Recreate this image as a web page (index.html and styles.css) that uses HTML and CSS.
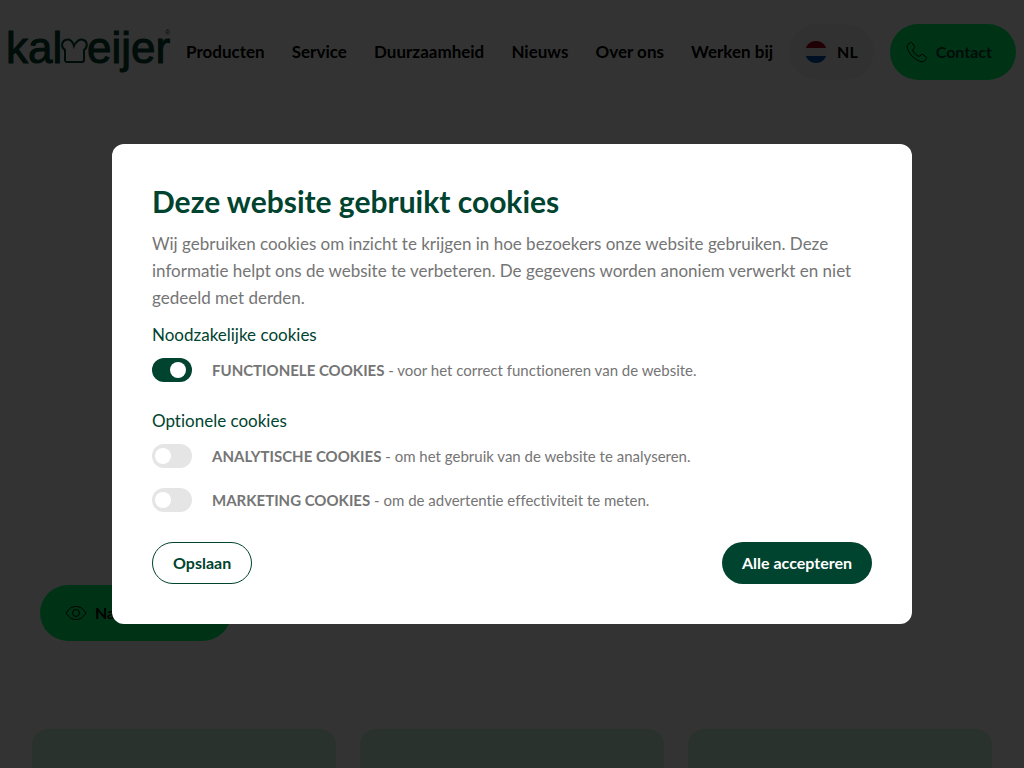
FILE: index.html
```
<!DOCTYPE html>
<html lang="nl">
  <head>
    <meta charset="UTF-8">
    <meta name="viewport" content="width=device-width, initial-scale=1.0">
    <title>Kalmeijer</title>
    <link rel="stylesheet" href="styles.css">
  </head>

  <body>
    <header class="header">
      <a class="logo" href="#" aria-label="Kalmeijer">
        <svg width="162" height="48" viewBox="0 0 162 48">
          <text class="logo-txt" x="-2" y="35">kal</text>
          <path class="bread" d="M59 34C57.500 34 57 33 57 31.500V22C53 20 53 13.500 57.500 12C61.500 10.500 65 13 66 18C68 13 72 10.500 75.500 12C80 13.500 79.500 20 76 22V31.500C76 33 75 34 74 34Z"/>
          <text class="logo-txt" x="79" y="35">eijer</text>
          <text class="logo-r" x="157" y="7">®</text>
        </svg>
      </a>

      <nav class="nav">
        <a href="#">Producten</a>
        <a href="#">Service</a>
        <a href="#">Duurzaamheid</a>
        <a href="#">Nieuws</a>
        <a href="#">Over ons</a>
        <a href="#">Werken bij</a>
      </nav>

      <button type="button" class="lang">
        <svg width="22" height="22" viewBox="0 0 22 22">
          <clipPath id="round"><circle cx="11" cy="11" r="11"/></clipPath>
          <g clip-path="url(#round)">
            <rect width="22" height="22" fill="#eee"/>
            <rect width="22" height="7" fill="#a2001d"/>
            <rect y="15" width="22" height="7" fill="#0052b4"/>
          </g>
        </svg>
        NL
      </button>

      <a class="btn" href="#">
        <svg class="icon" width="22" height="22" viewBox="0 0 22 22">
          <path d="M2 3.500L4 1.800C4.700 1.200 5.600 1.300 6.200 2L8.300 5C8.800 5.800 8.700 6.500 8.100 7.100L7 8.300C6.600 8.800 6.600 9.300 6.900 9.900C8.200 12.200 9.900 13.900 12.200 15.100C12.800 15.400 13.300 15.400 13.700 15L15 13.900C15.600 13.400 16.300 13.300 17 13.800L20 15.800C20.700 16.400 20.800 17.200 20.200 17.900L18.500 19.900C17.600 20.900 16.200 21 14.900 20.600C8.500 18.600 3.400 13.500 1.400 7.200C1 5.800 1 4.500 2 3.500Z"/>
        </svg>
        Contact
      </a>
    </header>

    <main>
      <section class="hero">
        <a class="btn btn-hero" href="#">
          <svg class="icon" width="22" height="16" viewBox="0 0 22 16">
            <path d="M1 8C4 3.500 7 1.500 11 1.500S18 3.500 21 8C18 12.500 15 14.500 11 14.500S4 12.500 1 8Z"/>
            <circle cx="11" cy="8" r="3.500"/>
          </svg>
          Naar producten
        </a>
      </section>

      <section class="cards">
        <div class="card"></div>
        <div class="card"></div>
        <div class="card"></div>
      </section>
    </main>

    <!-- cookiemelding -->
    <div class="overlay">
      <form class="modal" role="dialog" aria-labelledby="cookie-title">
        <h2 id="cookie-title">Deze website gebruikt cookies</h2>
        <p>Wij gebruiken cookies om inzicht te krijgen in hoe bezoekers onze website gebruiken. Deze informatie helpt ons de website te verbeteren. De gegevens worden anoniem verwerkt en niet gedeeld met derden.</p>

        <div class="group">
          <h3>Noodzakelijke cookies</h3>
          <label class="option">
            <input type="checkbox" checked>
            <span><b>FUNCTIONELE COOKIES</b> - voor het correct functioneren van de website.</span>
          </label>
        </div>

        <div class="group">
          <h3>Optionele cookies</h3>
          <label class="option">
            <input type="checkbox">
            <span><b>ANALYTISCHE COOKIES</b> - om het gebruik van de website te analyseren.</span>
          </label>
          <label class="option">
            <input type="checkbox">
            <span><b>MARKETING COOKIES</b> - om de advertentie effectiviteit te meten.</span>
          </label>
        </div>

        <div class="actions">
          <button type="button" class="save">Opslaan</button>
          <button type="button" class="accept">Alle accepteren</button>
        </div>
      </form>
    </div>
  </body>
</html>
```
FILE: styles.css
```
* {
  box-sizing: border-box;
}

body {
  margin: 0;
  height: 100vh;
  overflow: hidden;
  font: 400 16px/24px Lato, "Open Sans", sans-serif;
  font-variant-ligatures: none;
  color: #000;
  background: #fff;
}

h2, h3, p {
  margin: 0;
}

a {
  color: inherit;
  text-decoration: none;
}

button {
  font: inherit;
  cursor: pointer;
}

/* header */
.header {
  display: flex;
  align-items: center;
  gap: 16px;
  padding: 24px 8px;
}

.logo {
  height: 48px;
}

.logo svg {
  display: block;
  overflow: visible;
}

.logo-txt {
  font: 44px "Liberation Sans", sans-serif;
  fill: #00432f;
  stroke: #00432f;
  stroke-width: 1px;
}

.logo-r {
  font: 7px "Liberation Sans", sans-serif;
  fill: #00432f;
}

.bread {
  fill: none;
  stroke: #00432f;
  stroke-width: 2px;
}

.nav {
  display: flex;
  flex: 1;
  justify-content: space-between;
  font-size: 17px;
  font-weight: 700;
  white-space: nowrap;
}

.lang, .btn {
  display: inline-flex;
  align-items: center;
  height: 56px;
  border: 0;
  border-radius: 28px;
  font-size: 16px;
  font-weight: 700;
}

.lang {
  gap: 10px;
  padding: 0 16px;
  color: #000;
  background: #f5f5f5;
}

.btn {
  gap: 8px;
  padding: 0 24px 0 16px;
  color: #00432f;
  background: #00ff69;
}

.icon {
  fill: none;
  stroke: #000;
  stroke-width: 1px;
}

/* hero */
.hero {
  padding: 481px 40px 88px;
}

.btn-hero {
  display: flex;
  width: fit-content;
  padding: 0 25px;
  color: #000;
}

.cards {
  display: grid;
  grid-template-columns: repeat(3, 1fr);
  gap: 24px;
  padding: 0 32px;
}

.card {
  height: 320px;
  border-radius: 16px;
  background: #d2fae6;
}

/* cookie popup */
.overlay {
  position: fixed;
  inset: 0;
  display: flex;
  align-items: center;
  justify-content: center;
  background: rgba(0, 0, 0, .8);
}

.modal {
  width: 100%;
  max-width: 800px;
  padding: 40px;
  border-radius: 12px;
  color: #757575;
  background: #fff;
}

.modal h2 {
  margin-bottom: 12px;
  font-size: 30px;
  line-height: 34px;
  font-weight: 700;
  color: #00432f;
}

.modal p {
  font-size: 17px;
  line-height: 27px;
}

.modal h3 {
  padding: 10px 0;
  font-size: 17px;
  line-height: 27px;
  font-weight: 400;
  color: #00432f;
}

.group + .group {
  margin-top: 15px;
}

.option {
  display: flex;
  align-items: center;
  gap: 20px;
  font-size: 15px;
}

.option b {
  font-weight: 700;
}

.option + .option {
  margin-top: 20px;
}

/* schakelaar */
.option input {
  appearance: none;
  flex: none;
  width: 40px;
  height: 24px;
  margin: 0;
  padding: 4px 3px;
  border-radius: 12px;
  background: #e5e5e5;
}

.option input::before {
  content: '';
  display: block;
  width: 16px;
  height: 16px;
  border-radius: 50%;
  background: #fff;
}

.option input:checked {
  background: #00432f;
}

.option input:checked::before {
  margin-left: 15px;
}

.actions {
  display: flex;
  justify-content: space-between;
  margin-top: 30px;
}

.actions button {
  height: 42px;
  padding: 0 20px;
  border: 0;
  border-radius: 21px;
  font-weight: 700;
}

.actions .save {
  border: 1px solid #00432f;
  color: #00432f;
  background: #fff;
}

.actions .accept {
  color: #fff;
  background: #00432f;
}
```
